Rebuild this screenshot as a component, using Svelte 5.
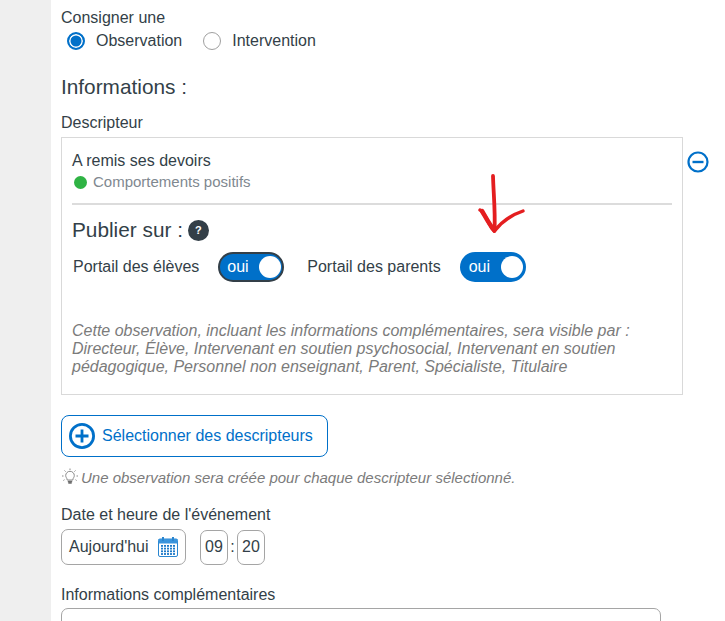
<script>
	const gridDots = [];
	for (let row = 0; row < 4; row++) {
		for (let col = 0; col < 5; col++) {
			gridDots.push({ x: 3 + col * 3, y: 8 + row * 2.7 });
		}
	}
</script>

<div class="page">
	<aside class="side"></aside>
	<main class="content">
		<div class="label">Consigner une</div>
		<div class="radios">
			<span class="radio on"></span>
			<span class="radio-text">Observation</span>
			<span class="radio off"></span>
			<span class="radio-text">Intervention</span>
		</div>

		<h2 class="title">Informations :</h2>
		<div class="label desc-label">Descripteur</div>

		<div class="desc-row">
			<section class="box">
				<div class="desc-name">A remis ses devoirs</div>
				<div class="desc-cat"><span class="dot"></span>Comportements positifs</div>
				<hr />
				<div class="publish">
					<span class="publish-title">Publier sur :</span>
					<span class="help">?</span>
				</div>
				<div class="toggles">
					<span class="toggle-label first">Portail des élèves</span>
					<span class="toggle focused"><span class="oui">oui</span><span class="knob"></span></span>
					<span class="toggle-label second">Portail des parents</span>
					<span class="toggle"><span class="oui">oui</span><span class="knob"></span></span>
					<svg class="arrow" width="52" height="60" viewBox="0 0 52 60" fill="none" stroke="#e41e20" stroke-linecap="round" stroke-linejoin="round">
						<path d="M17 2 C17.500 20 19.500 38 18.500 57" stroke-width="3.800" />
						<path d="M4 36 C8 38 11 46 14 51 C15 54 17 56 18.500 57 C24 50 32 42 47 37" stroke-width="3.400" />
						<path d="M6 37 C9 42 13 50 18 56" stroke-width="4.500" />
					</svg>
				</div>
				<p class="note">Cette observation, incluant les informations complémentaires, sera visible par : Directeur, Élève, Intervenant en soutien psychosocial, Intervenant en soutien pédagogique, Personnel non enseignant, Parent, Spécialiste, Titulaire</p>
			</section>
			<svg class="minus" width="22" height="22" viewBox="0 0 22 22" fill="none" stroke="#0070c9" stroke-width="2.200">
				<circle cx="11" cy="11" r="9.500" />
				<path d="M5.500 11 H16.500" stroke-width="2.400" />
			</svg>
		</div>

		<button class="select-btn">
			<svg width="28" height="28" viewBox="0 0 28 28" fill="none" stroke="#0070c9" stroke-width="2.800">
				<circle cx="14" cy="14" r="11.600" />
				<path d="M14 7.500 V20.500 M7.500 14 H20.500" stroke-width="2.800" />
			</svg>
			<span>Sélectionner des descripteurs</span>
		</button>

		<div class="hint">
			<svg width="18" height="18" viewBox="0 0 18 18" fill="none" stroke="#8a8a8a" stroke-width="1">
				<path d="M6.200 12 C6 9.800 4.700 9.500 4.700 7.600 A4.300 4.300 0 0 1 13.300 7.600 C13.300 9.500 12 9.800 11.800 12 Z" />
				<path d="M6.800 13.500 H11.200 M7.300 15 H10.700" stroke-width="1.500" stroke="#6f6f6f" />
				<path d="M9 0.500 V2 M3.500 2.500 L4.600 3.600 M14.500 2.500 L13.400 3.600 M1 8 H2.500 M15.500 8 H17 M2.400 12.500 L3.500 11.700 M15.600 12.500 L14.500 11.700" />
			</svg>
			<em>Une observation sera créée pour chaque descripteur sélectionné.</em>
		</div>

		<div class="label date-label">Date et heure de l'événement</div>
		<div class="date-row">
			<div class="date-input">
				<span>Aujourd'hui</span>
				<svg width="20" height="20" viewBox="0 0 20 20">
					<rect x="0.500" y="2" width="19" height="17.500" rx="1.500" fill="#fff" stroke="#2a86d0" />
					<rect x="0.500" y="2" width="19" height="4.500" fill="#3a94dc" />
					<rect x="4" y="0" width="2" height="4" fill="#2a86d0" />
					<rect x="14" y="0" width="2" height="4" fill="#2a86d0" />
					{#each gridDots as d}
						<rect x={d.x} y={d.y} width="2" height="1.800" fill="#1f7bc9" />
					{/each}
				</svg>
			</div>
			<div class="time">09</div>
			<span class="colon">:</span>
			<div class="time">20</div>
		</div>

		<div class="label info-label">Informations complémentaires</div>
		<div class="textarea"></div>
	</main>
</div>

<style>
	:global(body) {
		background: #fff;
		font-family: "Liberation Sans", Arial, sans-serif;
		color: #333f48;
	}

	.page {
		display: flex;
		width: 725px;
		height: 621px;
		overflow: hidden;
	}

	.side {
		width: 51px;
		flex: none;
		background: #efefef;
	}

	.content {
		padding: 9px 0 0 10px;
		flex: 1;
		min-width: 0;
	}

	.label {
		font-size: 16px;
		line-height: 18px;
	}

	.radios {
		display: flex;
		align-items: center;
		height: 20px;
		margin-top: 4px;
		margin-left: 6px;
	}

	.radio {
		box-sizing: border-box;
		width: 18px;
		height: 18px;
		border-radius: 50%;
		background: #fff;
		flex: none;
	}

	.radio.on {
		border: 2.500px solid #0070c9;
		box-shadow: inset 0 0 0 1.500px #fff;
		background: #0070c9;
	}

	.radio.off {
		border: 1px solid #a0a0a0;
		margin-left: 21px;
	}

	.radio-text {
		font-size: 16px;
		margin-left: 11px;
	}

	.title {
		font-size: 20.800px;
		font-weight: 400;
		line-height: 24px;
		margin: 24px 0 0;
	}

	.desc-label {
		margin-top: 15px;
	}

	.desc-row {
		display: flex;
		align-items: flex-start;
		margin-top: 5px;
	}

	.box {
		box-sizing: border-box;
		width: 622px;
		height: 258px;
		border: 1px solid #d9d9d9;
		padding: 14px 10px 0;
		flex: none;
	}

	.minus {
		margin: 14px 0 0 4px;
		flex: none;
	}

	.desc-name {
		font-size: 16px;
		line-height: 18px;
	}

	.desc-cat {
		display: flex;
		align-items: center;
		font-size: 15px;
		line-height: 18px;
		color: #808890;
		margin-top: 3px;
	}

	.dot {
		width: 13px;
		height: 13px;
		border-radius: 50%;
		background: #2fb344;
		margin: 0 6px 0 2px;
	}

	hr {
		border: 0;
		height: 2px;
		background: #dcdcdc;
		margin: 12px 0 0;
	}

	.publish {
		display: flex;
		align-items: center;
		margin-top: 12px;
		height: 26px;
	}

	.publish-title {
		font-size: 20.800px;
	}

	.help {
		width: 21px;
		height: 21px;
		border-radius: 50%;
		background: #333f48;
		color: #fff;
		font-size: 11px;
		font-weight: 700;
		display: flex;
		align-items: center;
		justify-content: center;
		margin-left: 5px;
	}

	.toggles {
		position: relative;
		display: flex;
		align-items: center;
		margin-top: 9px;
		height: 30px;
	}

	.toggle-label {
		font-size: 16px;
	}

	.toggle-label.first {
		margin-left: 1px;
	}

	.toggle-label.second {
		margin-left: 23px;
	}

	.toggle {
		box-sizing: border-box;
		display: flex;
		align-items: center;
		justify-content: space-between;
		width: 66px;
		height: 30px;
		border-radius: 15px;
		background: #0070c9;
		color: #fff;
		font-size: 16px;
		padding: 0 3px 0 9px;
		margin-left: 19px;
	}

	.toggle.focused {
		border: 2px solid #333f48;
		padding: 0 1px 0 7px;
	}

	.knob {
		width: 22px;
		height: 22px;
		border-radius: 50%;
		background: #fff;
	}

	.arrow {
		position: absolute;
		left: 404px;
		top: -78px;
	}

	.note {
		font-size: 16px;
		line-height: 18px;
		font-style: italic;
		color: #7b7b7b;
		margin: 40px 0 0;
	}

	.select-btn {
		display: flex;
		align-items: center;
		box-sizing: border-box;
		width: 267px;
		height: 42px;
		margin-top: 20px;
		padding: 0 0 0 6px;
		border: 1px solid #0070c9;
		border-radius: 8px;
		background: #fff;
		color: #0070c9;
		font-family: inherit;
		font-size: 16px;
	}

	.select-btn span {
		margin-left: 6px;
	}

	.hint {
		display: flex;
		align-items: center;
		margin-top: 11px;
		height: 18px;
		font-size: 15px;
		color: #7b7b7b;
	}

	.hint em {
		margin-left: 2px;
	}

	.date-label {
		margin-top: 20px;
	}

	.date-row {
		display: flex;
		align-items: center;
		margin-top: 5px;
	}

	.date-input {
		box-sizing: border-box;
		display: flex;
		align-items: center;
		justify-content: space-between;
		width: 125px;
		height: 36px;
		border: 1px solid #a5a5a5;
		border-radius: 7px;
		padding: 0 7px;
		font-size: 16px;
	}

	.time {
		box-sizing: border-box;
		width: 28px;
		height: 35px;
		border: 1px solid #a5a5a5;
		border-radius: 7px;
		font-size: 16px;
		display: flex;
		align-items: center;
		justify-content: center;
	}

	.date-input + .time {
		margin-left: 14px;
	}

	.colon {
		width: 9px;
		text-align: center;
		font-size: 16px;
	}

	.info-label {
		margin-top: 21px;
	}

	.textarea {
		box-sizing: border-box;
		width: 600px;
		height: 60px;
		margin-top: 4px;
		border: 1px solid #a5a5a5;
		border-radius: 7px;
	}
</style>
